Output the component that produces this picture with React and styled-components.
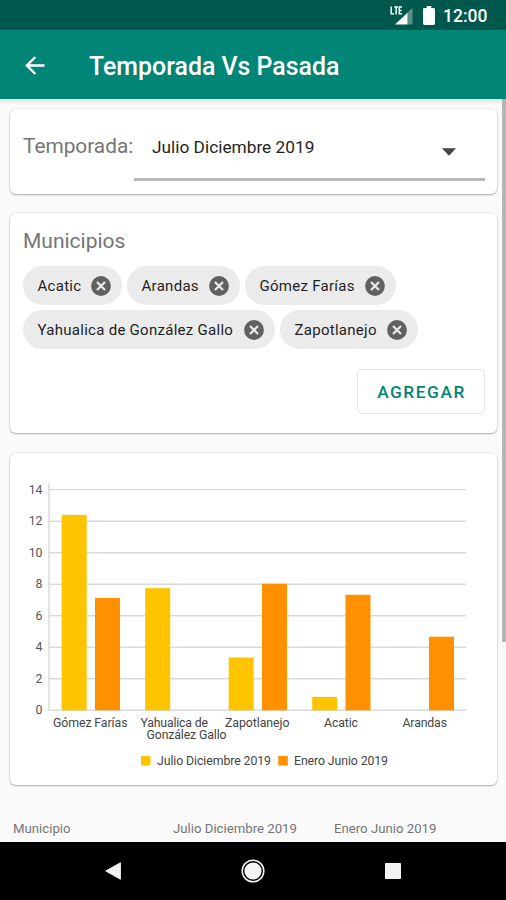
import React, { useState } from 'react';
import styled, { createGlobalStyle } from 'styled-components';

const colors = {
  primary: '#008577',
  primaryDark: '#00574b',
  background: '#fafafa',
  surface: '#ffffff',
  chip: '#ebebeb',
  text: '#1f1f1f',
  textMuted: '#757575',
  grid: '#d9d9d9',
  current: '#ffc400',
  previous: '#ff9100'
};

const seasons = ['Julio Diciembre 2019', 'Enero Junio 2019'];

const initialChips = [
  { name: 'Acatic', width: 99 },
  { name: 'Arandas', width: 113 },
  { name: 'Gómez Farías', width: 151 },
  { name: 'Yahualica de González Gallo', width: 252 },
  { name: 'Zapotlanejo', width: 138 }
];

const chartData = [
  { values: [12.4, 7.13], labels: [{ text: 'Gómez Farías', x: 53, width: 74.5 }] },
  {
    values: [7.75, 0],
    labels: [
      { text: 'Yahualica de', x: 140.5, width: 67.5 },
      { text: 'González Gallo', x: 146.5, width: 80 }
    ]
  },
  { values: [3.35, 8.03], labels: [{ text: 'Zapotlanejo', x: 225, width: 64.5 }] },
  { values: [0.85, 7.33], labels: [{ text: 'Acatic', x: 324, width: 34 }] },
  { values: [0, 4.67], labels: [{ text: 'Arandas', x: 402.5, width: 44.5 }] }
];

const ticks = [0, 2, 4, 6, 8, 10, 12, 14];
const baseY = 710.3;
const unit = 15.76;
const groupWidth = 83.5;

const SeasonChart = () => (
  <ChartSvg viewBox="10 453 487 332">
    {ticks.map(tick => (
      <g key={tick}>
        <line x1="49" x2="466" y1={baseY - tick * unit} y2={baseY - tick * unit} stroke={colors.grid} strokeWidth="1.4" />
        <TickLabel x="42.5" y={baseY - tick * unit + 4} textAnchor="end">{tick}</TickLabel>
      </g>
    ))}
    <line x1="49" x2="49" y1="483" y2="711" stroke={colors.grid} strokeWidth="1.4" />
    {chartData.map((group, i) => (
      <g key={group.labels[0].text}>
        {group.values.map((value, j) => (
          <rect
            key={j}
            x={61.7 + i * groupWidth + j * 33.3}
            y={baseY - value * unit}
            width="25"
            height={value * unit}
            fill={j === 0 ? colors.current : colors.previous}
          />
        ))}
        {group.labels.map((label, j) => (
          <AxisLabel key={label.text} x={label.x} y={726.5 + j * 12.5} textLength={label.width}>
            {label.text}
          </AxisLabel>
        ))}
      </g>
    ))}
    <rect x="141" y="756" width="9.5" height="9.5" fill={colors.current} />
    <AxisLabel x="157" y="765" textLength="114">{seasons[0]}</AxisLabel>
    <rect x="278.3" y="756" width="9.5" height="9.5" fill={colors.previous} />
    <AxisLabel x="294" y="765" textLength="94">{seasons[1]}</AxisLabel>
  </ChartSvg>
);

const App = () => {
  const [chips, setChips] = useState(initialChips);

  const removeChip = (name) => {
    setChips(prev => prev.filter(chip => chip.name !== name));
  };

  return (
    <Screen>
      <GlobalStyle />
      <StatusBar>
        <svg width="24" height="20" viewBox="0 0 24 20">
          <path d="M17.5 6.5 L22.5 2 V18.5 H17.5 Z" fill="#fff" opacity="0.35" />
          <path d="M5 18.5 L13 11 L17.5 6.5 V18.5 Z" fill="#fff" />
          <path d="M1.2 0.5 V7.7 H4 M4.3 1.1 H8 M6.1 1.1 V8.4 M12 1.1 H9.3 V7.7 H12 M9.3 4.4 H11.6" fill="none" stroke="#fff" strokeWidth="1.5" />
        </svg>
        <Battery width="12" height="19" viewBox="0 0 12 19">
          <path d="M3.7 0 H8.3 V2 H10.6 Q12 2 12 3.4 V17.6 Q12 19 10.6 19 H1.4 Q0 19 0 17.6 V3.4 Q0 2 1.4 2 H3.7 Z" fill="#fff" />
        </Battery>
        <Clock>12:00</Clock>
      </StatusBar>

      <AppBar>
        <BackButton aria-label="Atrás">
          <svg width="20" height="19" viewBox="0 0 20 19">
            <path d="M19.5 9.5 H2 M10.4 1 L1.9 9.5 L10.4 18" fill="none" stroke="#fff" strokeWidth="2.4" />
          </svg>
        </BackButton>
        <Title>Temporada Vs Pasada</Title>
      </AppBar>

      <Content>
        <Scrollbar />
        <SeasonCard>
          <SeasonLabel>Temporada:</SeasonLabel>
          <Spinner>
            <SpinnerText>{seasons[0]}</SpinnerText>
            <Caret width="14" height="8" viewBox="0 0 14 8">
              <path d="M0 0.3 H14 L7 7.7 Z" fill="#444" />
            </Caret>
          </Spinner>
        </SeasonCard>

        <TownsCard>
          <CardTitle>Municipios</CardTitle>
          <ChipGroup>
            {chips.map(chip => (
              <Chip key={chip.name} $width={chip.width}>
                <ChipText>{chip.name}</ChipText>
                <ChipClose onClick={() => removeChip(chip.name)} aria-label="Quitar">
                  <svg width="20" height="20" viewBox="0 0 20 20">
                    <circle cx="10" cy="10" r="9.9" fill="#616161" />
                    <path d="M6 6 L14 14 M14 6 L6 14" stroke={colors.chip} strokeWidth="2.2" />
                  </svg>
                </ChipClose>
              </Chip>
            ))}
          </ChipGroup>
          <AddButton>AGREGAR</AddButton>
        </TownsCard>

        <ChartCard>
          <SeasonChart />
        </ChartCard>

        <TableHeader>
          <TableCell>Municipio</TableCell>
          <TableCell>{seasons[0]}</TableCell>
          <TableCell>{seasons[1]}</TableCell>
        </TableHeader>
      </Content>

      <NavBar>
        <svg width="16" height="18" viewBox="0 0 16 18">
          <path d="M0.8 9 L15.4 0.8 V17.2 Z" fill="#f2f2f2" stroke="#f2f2f2" strokeLinejoin="round" />
        </svg>
        <svg width="24" height="24" viewBox="0 0 24 24">
          <circle cx="12" cy="12" r="10.8" fill="none" stroke="#f2f2f2" strokeWidth="1.5" />
          <circle cx="12" cy="12" r="8.6" fill="#f5f5f5" />
        </svg>
        <svg width="16" height="16" viewBox="0 0 16 16">
          <rect width="16" height="16" rx="0.8" fill="#f2f2f2" />
        </svg>
      </NavBar>
    </Screen>
  );
};

// Styled Components
const GlobalStyle = createGlobalStyle`
  * {
    box-sizing: border-box;
  }
  body {
    margin: 0;
    font-family: Roboto, sans-serif;
  }
  svg {
    display: block;
    flex-shrink: 0;
  }
  button {
    font-family: inherit;
    cursor: pointer;
  }
`;

const Screen = styled.div`
  display: flex;
  flex-direction: column;
  width: 506px;
  height: 900px;
  overflow: hidden;
  background: ${colors.background};
`;

const StatusBar = styled.div`
  display: flex;
  height: 30px;
  flex-shrink: 0;
  padding: 6px 0 0 390px;
  background: ${colors.primaryDark};
`;

const Battery = styled.svg`
  margin-left: 8.5px;
`;

const Clock = styled.span`
  margin-left: 8.5px;
  font-size: 17.5px;
  font-weight: 500;
  line-height: 20px;
  color: #fff;
`;

const AppBar = styled.header`
  display: flex;
  align-items: center;
  height: 69px;
  flex-shrink: 0;
  padding: 1px 0 0 25px;
  background: ${colors.primary};
`;

const BackButton = styled.button`
  padding: 0;
  border: none;
  background: none;
`;

const Title = styled.h1`
  margin: 3px 0 0 44px;
  font-size: 24.9px;
  font-weight: 500;
  line-height: 32px;
  white-space: nowrap;
  color: #fff;
`;

const Content = styled.main`
  position: relative;
  display: flex;
  flex: 1;
  flex-direction: column;
  gap: 19px;
  padding: 10px 9px 0 10px;
  background: linear-gradient(#e4e4e4, ${colors.background} 6px);
`;

const Scrollbar = styled.div`
  position: absolute;
  top: 0;
  right: 0;
  width: 4.5px;
  height: 543px;
  background: #b5b5b5;
`;

const Card = styled.section`
  flex-shrink: 0;
  border-radius: 6px;
  background: ${colors.surface};
  box-shadow: 0 1px 2px rgba(0, 0, 0, 0.3), 0 0 2px rgba(0, 0, 0, 0.12);
`;

const SeasonCard = styled(Card)`
  display: flex;
  height: 85px;
  padding: 14px 12px 12px 13px;
`;

const SeasonLabel = styled.label`
  width: 111px;
  margin-top: 9px;
  font-size: 20.8px;
  line-height: 28px;
  color: ${colors.textMuted};
`;

const Spinner = styled.div`
  display: flex;
  flex: 1;
  align-items: center;
  justify-content: space-between;
  height: 58px;
  padding: 0 29px 0 18px;
  border-bottom: 3px solid #b8b8b8;
`;

const SpinnerText = styled.span`
  margin-top: -7px;
  font-size: 17.3px;
  line-height: 24px;
  color: ${colors.text};
`;

const Caret = styled.svg`
  margin-top: 2px;
`;

const TownsCard = styled(Card)`
  display: flex;
  flex-direction: column;
  height: 220px;
  margin-bottom: 1px;
  padding: 14px 12px 0 13px;
`;

const CardTitle = styled.h2`
  margin: 0;
  font-size: 21px;
  font-weight: 400;
  line-height: 28px;
  color: ${colors.textMuted};
`;

const ChipGroup = styled.div`
  display: flex;
  flex-wrap: wrap;
  gap: 5px;
  height: 83px;
  margin-top: 11px;
`;

const Chip = styled.div`
  display: flex;
  align-items: center;
  justify-content: space-between;
  width: ${props => props.$width}px;
  height: 39px;
  padding: 0 11px 0 14.5px;
  border-radius: 20px;
  background: ${colors.chip};
`;

const ChipText = styled.span`
  font-size: 15px;
  letter-spacing: 0.28px;
  white-space: nowrap;
  color: ${colors.text};
`;

const ChipClose = styled.button`
  padding: 0;
  border: none;
  background: none;
`;

const AddButton = styled.button`
  align-self: flex-end;
  width: 128px;
  height: 45px;
  margin-top: 20px;
  padding: 1px 0 0 1px;
  border: 1.5px solid #e3e3e3;
  border-radius: 5px;
  background: ${colors.surface};
  font-size: 17.3px;
  font-weight: 500;
  letter-spacing: 1.55px;
  color: ${colors.primary};
`;

const ChartCard = styled(Card)`
  height: 332px;
`;

const ChartSvg = styled.svg`
  width: 487px;
  height: 332px;
`;

const AxisLabel = styled.text`
  font-size: 12.3px;
  fill: #444;
`;

const TickLabel = styled.text`
  font-size: 12.3px;
  fill: #555;
`;

const TableHeader = styled.div`
  display: grid;
  grid-template-columns: 160px 161px 1fr;
  margin-top: 15px;
  padding-left: 3px;
`;

const TableCell = styled.span`
  font-size: 13.2px;
  line-height: 20px;
  color: ${colors.textMuted};
`;

const NavBar = styled.nav`
  display: flex;
  align-items: center;
  justify-content: space-between;
  height: 58px;
  flex-shrink: 0;
  padding: 0 105px;
  background: #000;
`;

export default App;
